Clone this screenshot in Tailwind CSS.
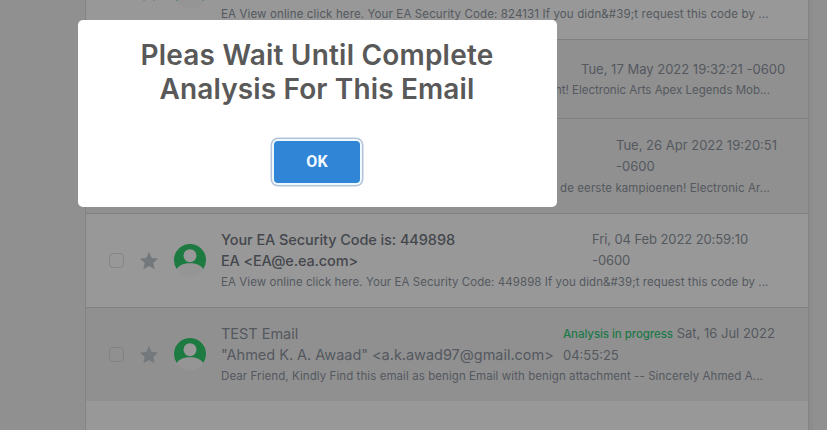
<!DOCTYPE html>
<html lang="en">
<head>
<meta charset="utf-8">
<title>Inbox</title>
<script src="https://cdn.jsdelivr.net/npm/@tailwindcss/browser@4"></script>
</head>
<body class="relative h-[430px] overflow-hidden bg-[#909090] font-['Inter',sans-serif] text-[#54585f]">
<svg class="hidden">
  <symbol id="star" viewBox="0 0 18 18"><path fill="#73787c" d="M9 0l2.700 5.900 6.300.7-4.700 4.300 1.400 6.400L9 14.100l-5.700 3.200 1.400-6.400L0 6.600l6.300-.7z"/></symbol>
  <symbol id="user" viewBox="0 0 36 36">
    <circle cx="18" cy="18" r="16.500" fill="#959595"/>
    <path fill="#1d7a40" d="M4.800 27A16 16 0 1 1 31.200 27C28.500 23 24 21.300 18 21.300S7.500 23 4.800 27z"/>
    <circle cx="18" cy="13.700" r="6.500" fill="#999"/>
  </symbol>
</svg>

<main class="ml-[85px] flex h-[430px] w-[724px] flex-col justify-end border-x border-[#838383] bg-[#989898] shadow-[4px_0_0_#8d8d8d]">
  <article class="flex h-[94px] shrink-0 items-center border-b border-[#808080] pl-[23px]">
    <span class="size-[15px] rounded-[4px] border border-[#868686]"></span>
    <svg class="ml-4 size-[18px]"><use href="#star"/></svg>
    <svg class="mb-0.5 ml-[14px] size-9"><use href="#user"/></svg>
    <div class="ml-[13px] w-[572px] whitespace-nowrap pt-[43px] leading-[21px]">
      <p class="text-[11.5px] tracking-[0.128px]">EA View online click here. Your EA Security Code: 824131 If you didn&amp;#39;t request this code by ...</p>
    </div>
  </article>

  <article class="h-[79px] shrink-0 border-b border-[#808080] bg-[#909090] pt-[19px] pl-[135px] leading-[21px] whitespace-nowrap">
    <div class="pl-[360px] text-[13px]">Tue, 17 May 2022 19:32:21 -0600</div>
    <p class="pl-[334px] text-[11.5px]">nt! Electronic Arts Apex Legends Mob...</p>
  </article>

  <article class="h-[95px] shrink-0 border-b border-[#808080] bg-[#909090] pt-4 pl-[135px] leading-[21px] whitespace-nowrap">
    <div class="pl-[395px] text-[13px]">Tue, 26 Apr 2022 19:20:51<br>-0600</div>
    <p class="pt-px pl-[339px] text-[11.5px] tracking-[0.102px]">de eerste kampioenen! Electronic Ar...</p>
  </article>

  <article class="flex h-[94px] shrink-0 items-center border-b border-[#808080] pl-[23px]">
    <span class="size-[15px] rounded-[4px] border border-[#868686]"></span>
    <svg class="ml-4 size-[18px]"><use href="#star"/></svg>
    <svg class="mb-0.5 ml-[14px] size-9"><use href="#user"/></svg>
    <div class="ml-[13px] w-[572px] whitespace-nowrap pt-px leading-[21px]">
      <div class="flex h-[42px]">
        <div class="w-[371px] text-[14.5px] font-medium tracking-[-0.08px] text-[#44474d]">Your EA Security Code is: 449898<br><span class="tracking-[-0.14px]">EA &lt;EA@e.ea.com&gt;</span></div>
        <div class="text-[13px] tracking-[-0.09px]">Fri, 04 Feb 2022 20:59:10<br>-0600</div>
      </div>
      <p class="pt-px text-[11.5px] tracking-[0.068px]">EA View online click here. Your EA Security Code: 449898 If you didn&amp;#39;t request this code by ...</p>
    </div>
  </article>

  <article class="flex h-[93px] shrink-0 items-center bg-[#909090] pl-[23px]">
    <span class="size-[15px] rounded-[4px] border border-[#828282]"></span>
    <svg class="ml-4 size-[18px]"><use href="#star"/></svg>
    <svg class="mb-0.5 ml-[14px] size-9"><use href="#user"/></svg>
    <div class="ml-[13px] w-[572px] whitespace-nowrap pt-px leading-[21px]">
      <div class="flex h-[42px]">
        <div class="w-[342px] text-[14.5px] tracking-[-0.02px]">TEST Email<br>"Ahmed K. A. Awaad" &lt;a.k.awad97@gmail.com&gt;</div>
        <div class="text-[13px]"><span class="text-[11.5px] font-medium tracking-[-0.06px] text-[#20794a]">Analysis in progress</span> Sat, 16 Jul 2022<br>04:55:25</div>
      </div>
      <p class="pt-px text-[11.5px] tracking-[0.077px]">Dear Friend, Kindly Find this email as benign Email with benign attachment -- Sincerely Ahmed A...</p>
    </div>
  </article>
  <div class="h-[29px] shrink-0"></div>
</main>

<section class="absolute top-5 left-[77.5px] flex h-[187px] w-[479px] flex-col items-center rounded-[5px] bg-white pt-[18px] text-center">
  <h2 class="h-[103px] text-[28px] leading-[34px] font-semibold tracking-[0.206px] text-[#595959]">Pleas Wait Until Complete<br><span class="tracking-[0.138px]">Analysis For This Email</span></h2>
  <button class="h-[42px] w-[86px] rounded-[4px] bg-[#3085d6] font-['Roboto',sans-serif] text-[16px] font-bold tracking-[0.2px] text-[#f2faff] shadow-[0_0_0_2px_#eef8ff,0_0_0_3.5px_#b4c3d9]">OK</button>
</section>
</body>
</html>
